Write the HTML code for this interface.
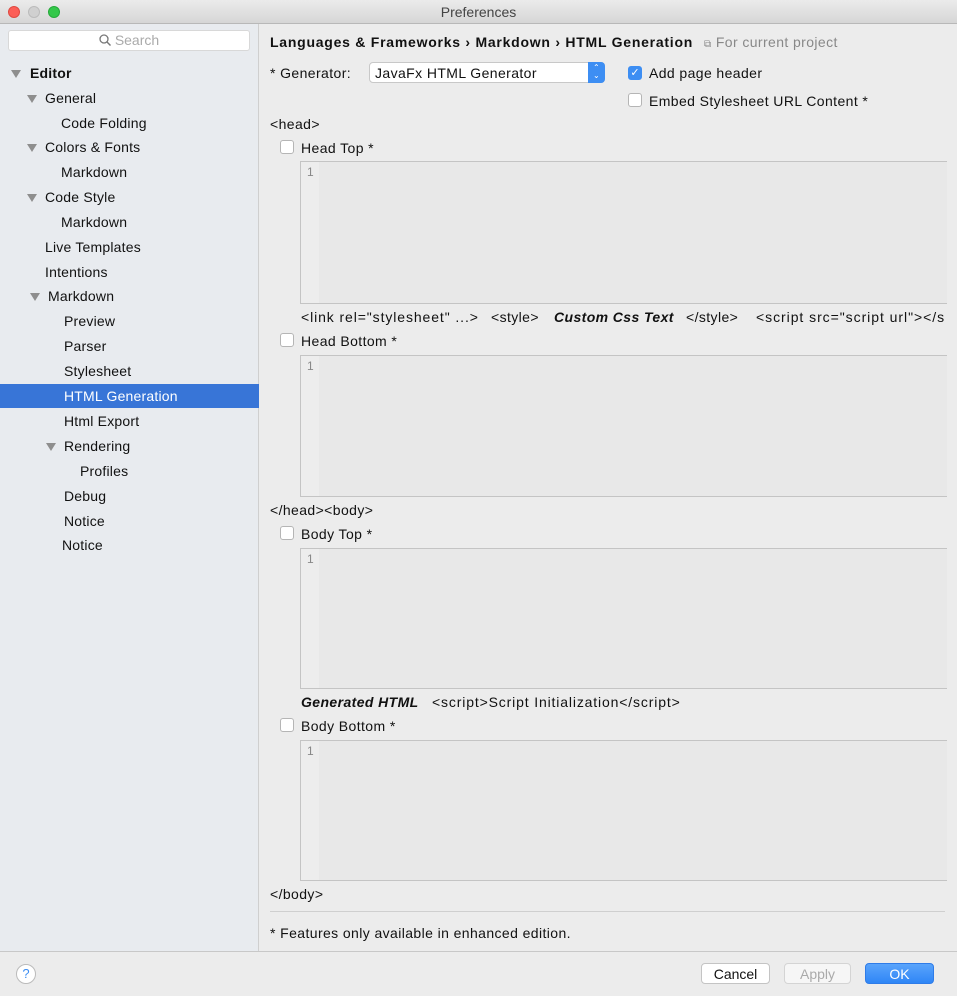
<!DOCTYPE html>
<html><head><meta charset="utf-8"><style>
*{margin:0;padding:0;box-sizing:border-box}
body{width:957px;height:996px;position:relative;overflow:hidden;font-family:"Liberation Sans",sans-serif;font-size:14px;color:#111;background:#ececec}
.a{position:absolute;white-space:nowrap}
.r{letter-spacing:0.4px}
#title{left:0;top:0;width:957px;height:24px;background:linear-gradient(#ebebeb,#d6d6d6);border-bottom:1px solid #b8b8b8;text-align:center;line-height:24px;font-size:14px;color:#444}
.dot{position:absolute;top:6px;width:12px;height:12px;border-radius:50%}
#side{left:0;top:24px;width:259px;height:927px;background:#e8ebef;border-right:1px solid #cfcfcf}
#search{left:8px;top:30px;width:242px;height:21px;background:#fff;border:1px solid #d8d8d8;border-radius:3px;color:#aaa;text-align:center;line-height:19px;font-size:14px}
.t{position:absolute;white-space:nowrap;line-height:25px;height:25px;letter-spacing:0.2px}
.tri{position:absolute;width:0;height:0;border-left:5px solid transparent;border-right:5px solid transparent;border-top:8px solid #8e8e8e}
#sel{left:0;top:384px;width:259px;height:24px;background:#3875d7}
.cb{position:absolute;width:14px;height:14px;background:#fff;border:1px solid #b5b5b5;border-radius:3px}
.ed{position:absolute;left:300px;width:647px;background:#e8e8e8;border:1px solid #c4c4c4;border-right:none}
.ed .g{position:absolute;left:0;top:0;bottom:0;width:18px;background:#ededed}
.ed .n{position:absolute;left:6px;top:3px;font-size:12px;color:#888}
.btn{position:absolute;top:963px;height:21px;border-radius:4px;text-align:center;line-height:20px;font-size:14px}
</style></head><body>
<div id="title" class="a">Preferences
<div class="dot" style="left:8px;background:#fc5f57;border:1px solid #de4a41"></div>
<div class="dot" style="left:28px;background:#d0d0d0;border:1px solid #bbb"></div>
<div class="dot" style="left:48px;background:#34c84a;border:1px solid #25a93a"></div>
</div>
<div id="side" class="a"></div>
<div id="search" class="a"><svg width="12" height="12" style="vertical-align:-1px;margin-right:4px"><circle cx="5" cy="5" r="4" fill="none" stroke="#777" stroke-width="1.3"/><line x1="8" y1="8" x2="11.5" y2="11.5" stroke="#777" stroke-width="1.4"/></svg>Search</div>
<div id="sel" class="a"></div>
<div class="tri" style="left:11px;top:70px"></div>
<div class="t" style="left:30px;top:61px;font-weight:bold">Editor</div>
<div class="tri" style="left:27px;top:95px"></div>
<div class="t" style="left:45px;top:86px">General</div>
<div class="t" style="left:61px;top:111px">Code Folding</div>
<div class="tri" style="left:27px;top:144px"></div>
<div class="t" style="left:45px;top:135px">Colors &amp; Fonts</div>
<div class="t" style="left:61px;top:160px">Markdown</div>
<div class="tri" style="left:27px;top:194px"></div>
<div class="t" style="left:45px;top:185px">Code Style</div>
<div class="t" style="left:61px;top:210px">Markdown</div>
<div class="t" style="left:45px;top:235px">Live Templates</div>
<div class="t" style="left:45px;top:260px">Intentions</div>
<div class="tri" style="left:30px;top:293px"></div>
<div class="t" style="left:48px;top:284px">Markdown</div>
<div class="t" style="left:64px;top:309px">Preview</div>
<div class="t" style="left:64px;top:334px">Parser</div>
<div class="t" style="left:64px;top:359px">Stylesheet</div>
<div class="t" style="left:64px;top:384px;color:#fff">HTML Generation</div>
<div class="t" style="left:64px;top:409px">Html Export</div>
<div class="tri" style="left:46px;top:443px"></div>
<div class="t" style="left:64px;top:434px">Rendering</div>
<div class="t" style="left:80px;top:459px">Profiles</div>
<div class="t" style="left:64px;top:484px">Debug</div>
<div class="t" style="left:64px;top:509px">Notice</div>
<div class="t" style="left:62px;top:533px">Notice</div>

<div class="a" style="left:270px;top:34px;font-weight:bold;letter-spacing:0.75px">Languages &amp; Frameworks › Markdown › HTML Generation</div>
<div class="a r" style="left:704px;top:34px;color:#888"><span style="font-size:10px">⧉</span> For current project</div>
<div class="a r" style="left:270px;top:65px">* Generator:</div>
<div class="a r" style="left:369px;top:62px;width:236px;height:21px;background:#fff;border:1px solid #c8c8c8;border-radius:4px;line-height:20px;padding-left:5px">JavaFx HTML Generator
<div style="position:absolute;right:-1px;top:-1px;width:17px;height:21px;background:#3d8ef3;border-radius:0 4px 4px 0;color:#fff;font-size:8px;line-height:8px;text-align:center;padding-top:2px">⌃<br>⌄</div></div>
<div class="cb" style="left:628px;top:66px;background:#3d8ef3;border-color:#3d8ef3;color:#fff;font-size:11px;line-height:12px;text-align:center">✓</div>
<div class="a r" style="left:649px;top:65px">Add page header</div>
<div class="cb" style="left:628px;top:93px"></div>
<div class="a r" style="left:649px;top:93px">Embed Stylesheet URL Content *</div>

<div class="a r" style="left:270px;top:116px">&lt;head&gt;</div>
<div class="cb" style="left:280px;top:140px"></div>
<div class="a r" style="left:301px;top:140px">Head Top *</div>
<div class="ed" style="top:161px;height:143px"><div class="g"></div><div class="n">1</div></div>
<div class="a" style="left:301px;top:309px;letter-spacing:0.9px">&lt;link rel="stylesheet" ...&gt;</div>
<div class="a r" style="left:491px;top:309px">&lt;style&gt;</div>
<div class="a r" style="left:554px;top:309px;font-weight:bold;font-style:italic">Custom Css Text</div>
<div class="a r" style="left:686px;top:309px">&lt;/style&gt;</div>
<div class="a" style="left:756px;top:309px;letter-spacing:0.95px">&lt;script src="script url"&gt;&lt;/s</div>
<div class="cb" style="left:280px;top:333px"></div>
<div class="a r" style="left:301px;top:333px">Head Bottom *</div>
<div class="ed" style="top:355px;height:142px"><div class="g"></div><div class="n">1</div></div>
<div class="a r" style="left:270px;top:502px">&lt;/head&gt;&lt;body&gt;</div>
<div class="cb" style="left:280px;top:526px"></div>
<div class="a r" style="left:301px;top:526px">Body Top *</div>
<div class="ed" style="top:548px;height:141px"><div class="g"></div><div class="n">1</div></div>
<div class="a r" style="left:301px;top:694px;font-weight:bold;font-style:italic">Generated HTML</div>
<div class="a" style="left:432px;top:694px;letter-spacing:0.85px">&lt;script&gt;Script Initialization&lt;/script&gt;</div>
<div class="cb" style="left:280px;top:718px"></div>
<div class="a r" style="left:301px;top:718px">Body Bottom *</div>
<div class="ed" style="top:740px;height:141px"><div class="g"></div><div class="n">1</div></div>
<div class="a r" style="left:270px;top:886px">&lt;/body&gt;</div>
<div class="a" style="left:270px;top:911px;width:675px;height:1px;background:#cfcfcf"></div>
<div class="a r" style="left:270px;top:925px">* Features only available in enhanced edition.</div>

<div class="a" style="left:0;top:951px;width:957px;height:45px;background:#ececec;border-top:1px solid #c8c8c8"></div>
<div class="a" style="left:16px;top:964px;width:20px;height:20px;border-radius:50%;background:#fff;border:1px solid #bbb;color:#3d8ef3;text-align:center;line-height:18px;font-size:13px">?</div>
<div class="btn" style="left:701px;width:69px;background:#fff;border:1px solid #c4c4c4">Cancel</div>
<div class="btn" style="left:784px;width:67px;background:#f6f6f6;border:1px solid #d4d4d4;color:#aaa">Apply</div>
<div class="btn" style="left:865px;width:69px;background:linear-gradient(#5aa4fb,#2f86f6);border:1px solid #2f7ce8;color:#fff">OK</div>
</body></html>
